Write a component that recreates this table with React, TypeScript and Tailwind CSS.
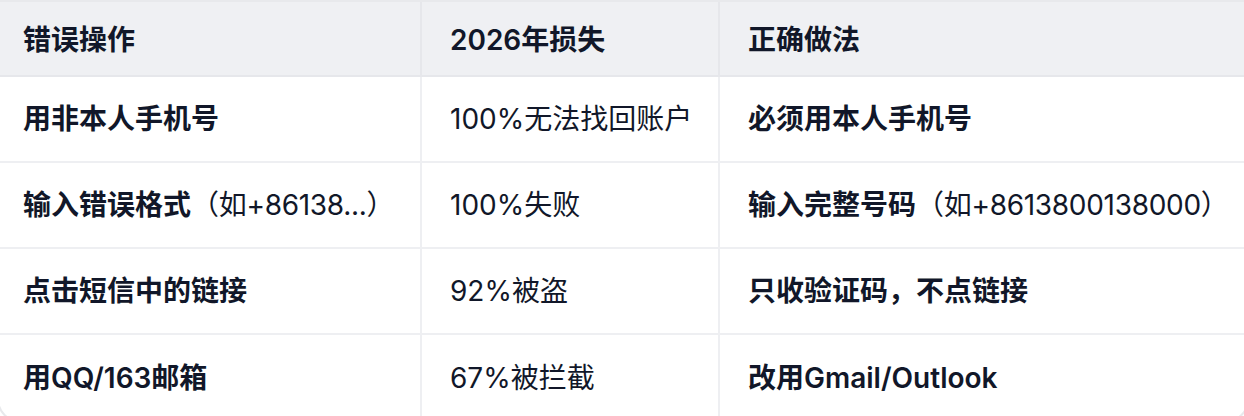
import React from "react";

type Cell = { strong: string; rest?: string };

interface Row {
  mistake: Cell;
  loss: string;
  fix: Cell;
}

const rows: Row[] = [
  { mistake: { strong: "用非本人手机号" }, loss: "100%无法找回账户", fix: { strong: "必须用本人手机号" } },
  {
    mistake: { strong: "输入错误格式", rest: "（如+86138...）" },
    loss: "100%失败",
    fix: { strong: "输入完整号码", rest: "（如+8613800138000）" },
  },
  { mistake: { strong: "点击短信中的链接" }, loss: "92%被盗", fix: { strong: "只收验证码，不点链接" } },
  { mistake: { strong: "用QQ/163邮箱" }, loss: "67%被拦截", fix: { strong: "改用Gmail/Outlook" } },
];

const RichCell = ({ cell }: { cell: Cell }) => (
  <>
    <span className="font-semibold">{cell.strong}</span>
    {cell.rest && <span className="font-normal tracking-[-0.3px]">{cell.rest}</span>}
  </>
);

export default function App() {
  return (
    <div
      className="min-h-screen bg-white overflow-hidden"
      style={{ fontFamily: '"Inter", "Noto Sans CJK SC", sans-serif' }}
    >
      <div className="-ml-[3px] w-[1252px] border-2 border-[#e8e9ec] rounded-b-[24px] overflow-hidden text-[28px] text-[#111729]">
        {/* header */}
        <div className="grid grid-cols-[423px_298px_1fr] h-[75px] bg-[#eff0f3] border-b-2 border-[#e6e7eb] font-semibold">
          <div className="flex items-center pl-6 pt-[2px] border-r-2 border-[#e6e7eb]">错误操作</div>
          <div className="flex items-center pl-7 pt-[2px] border-r-2 border-[#e6e7eb]">2026年损失</div>
          <div className="flex items-center pl-7 pt-[2px]">正确做法</div>
        </div>

        {rows.map((row, i) => (
          <div
            key={i}
            className="grid grid-cols-[423px_298px_1fr] h-[86px] border-b-2 border-[#eeeff2] last:border-b-0"
          >
            <div className="flex items-center pl-6 border-r-2 border-[#eeeff2] whitespace-nowrap">
              <RichCell cell={row.mistake} />
            </div>
            <div className="flex items-center pl-7 border-r-2 border-[#eeeff2] whitespace-nowrap">{row.loss}</div>
            <div className="flex items-center pl-7 whitespace-nowrap">
              <RichCell cell={row.fix} />
            </div>
          </div>
        ))}
      </div>
    </div>
  );
}
